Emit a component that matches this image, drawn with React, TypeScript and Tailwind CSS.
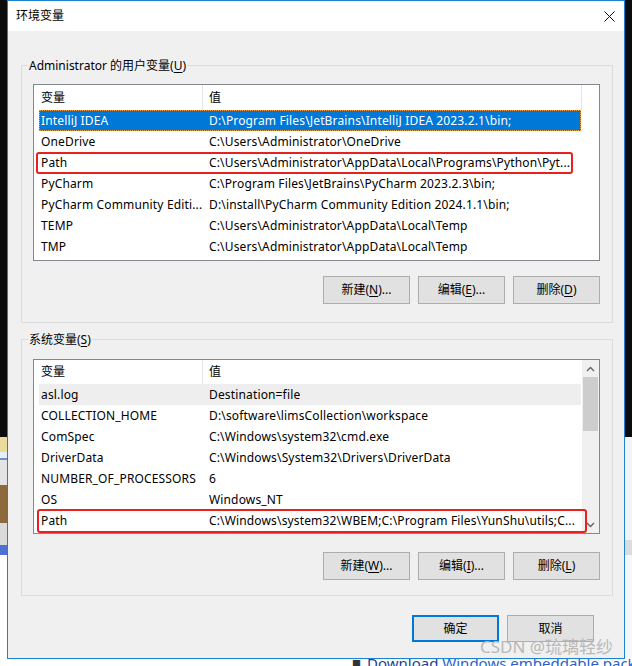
import React from "react";

const U = ({ c }: { c: string }) => (
  <span className="underline underline-offset-[2px] decoration-[1px]">{c}</span>
);

function Btn({
  children,
  primary,
  h = "h-[28px]",
}: {
  children: React.ReactNode;
  primary?: boolean;
  h?: string;
}) {
  return (
    <div
      className={
        "w-[87px] flex items-center justify-center bg-[#e1e1e1] text-[12px] text-black " +
        h +
        " " +
        (primary ? "border-2 border-[#0078d7]" : "border border-[#adadad]")
      }
    >
      {children}
    </div>
  );
}

function ListHeader() {
  return (
    <div className="flex h-[25px] w-[548px] border-r border-[#e5e5e5] shrink-0">
      <div className="w-[169px] h-full pl-[7px] flex items-center border-r border-[#e5e5e5]">
        变量
      </div>
      <div className="flex-1 h-full pl-[6px] flex items-center">值</div>
    </div>
  );
}

type Row = {
  k: string;
  v: string;
  selected?: boolean;
  inactive?: boolean;
  red?: "user" | "sys";
};

function ListRow({ r }: { r: Row }) {
  const bg = r.selected
    ? "bg-[#0078d7] text-white outline-1 outline-dotted outline-offset-[-1px] outline-[#f2a24a]"
    : r.inactive
    ? "bg-[#eeeeee] text-black"
    : "text-black";
  return (
    <div className={"relative ml-[5px] w-[542px] h-[21px] flex items-center shrink-0 tracking-[0.15px] " + bg}>
      <div className="w-[166px] pl-[2px] whitespace-nowrap overflow-hidden">{r.k}</div>
      <div className="flex-1 pl-[4px] whitespace-nowrap overflow-hidden">{r.v}</div>
      {r.red === "user" && (
        <div className="absolute left-[-3px] top-0 right-[8px] bottom-[-1px] border-2 border-[#e8201e] rounded-[3px]" />
      )}
      {r.red === "sys" && (
        <div className="absolute left-[-2px] top-[-1px] right-[-6px] bottom-[-2px] border-2 border-[#e8201e] rounded-[3px]" />
      )}
    </div>
  );
}

const userRows: Row[] = [
  { k: "IntelliJ IDEA", v: "D:\\Program Files\\JetBrains\\IntelliJ IDEA 2023.2.1\\bin;", selected: true },
  { k: "OneDrive", v: "C:\\Users\\Administrator\\OneDrive" },
  { k: "Path", v: "C:\\Users\\Administrator\\AppData\\Local\\Programs\\Python\\Pyt...", red: "user" },
  { k: "PyCharm", v: "C:\\Program Files\\JetBrains\\PyCharm 2023.2.3\\bin;" },
  { k: "PyCharm Community Editi...", v: "D:\\install\\PyCharm Community Edition 2024.1.1\\bin;" },
  { k: "TEMP", v: "C:\\Users\\Administrator\\AppData\\Local\\Temp" },
  { k: "TMP", v: "C:\\Users\\Administrator\\AppData\\Local\\Temp" },
];

const sysRows: Row[] = [
  { k: "asl.log", v: "Destination=file", inactive: true },
  { k: "COLLECTION_HOME", v: "D:\\software\\limsCollection\\workspace" },
  { k: "ComSpec", v: "C:\\Windows\\system32\\cmd.exe" },
  { k: "DriverData", v: "C:\\Windows\\System32\\Drivers\\DriverData" },
  { k: "NUMBER_OF_PROCESSORS", v: "6" },
  { k: "OS", v: "Windows_NT" },
  { k: "Path", v: "C:\\Windows\\system32\\WBEM;C:\\Program Files\\YunShu\\utils;C...", red: "sys" },
];

function Chevron({ up }: { up?: boolean }) {
  return (
    <svg width="9" height="6" viewBox="0 0 9 6">
      <path
        d={up ? "M1 5 L4.5 1.5 L8 5" : "M1 1 L4.5 4.5 L8 1"}
        fill="none"
        stroke="#606060"
        strokeWidth="1.3"
      />
    </svg>
  );
}

function Scrollbar() {
  return (
    <div className="w-[17px] h-full bg-[#f0f0f0] flex flex-col shrink-0">
      <div className="h-[17px] flex items-center justify-center">
        <Chevron up />
      </div>
      <div className="flex-1 px-[1px]">
        <div className="h-[54px] bg-[#cdcdcd]" />
      </div>
      <div className="h-[17px] flex items-center justify-center">
        <Chevron />
      </div>
    </div>
  );
}

function GroupLabel({ children }: { children: React.ReactNode }) {
  return (
    <div className="-mt-[8px] -ml-[5px] px-[1px] w-fit h-[16px] leading-[16px] bg-[#f0f0f0] text-black">
      {children}
    </div>
  );
}

export default function App() {
  return (
    <div className="relative w-[632px] h-[666px] overflow-hidden bg-white font-['Noto_Sans','Noto_Sans_CJK_SC',sans-serif] text-[12px]">
      <div className="flex h-[659px]">
        {/* left desktop strip */}
        <div className="w-[7px] h-full flex flex-col shrink-0">
          <div className="h-[437px] bg-[#0c0c0c]" />
          <div className="h-[15px] bg-[#eadb9c]" />
          <div className="h-[6px] bg-[#e8eef6]" />
          <div className="h-[2px] bg-[#6c8fcf]" />
          <div className="h-[25px] bg-[#e4e4e4]" />
          <div className="h-[38px] bg-[#8c6a3c]" />
          <div className="h-[22px] bg-[#dadada]" />
          <div className="h-[10px] bg-[#4d72d4]" />
          <div className="flex-1 bg-white" />
        </div>

        {/* window */}
        <div className="w-[618px] h-full border border-[#1883d7] flex flex-col bg-[#f0f0f0] shrink-0">
          <div className="h-[30px] bg-white flex items-center justify-between pl-[8px] pr-[9px] shrink-0">
            <span className="text-[12px] text-black">环境变量</span>
            <svg width="11" height="11" viewBox="0 0 11 11">
              <path d="M0.5 0.5 L10.5 10.5 M10.5 0.5 L0.5 10.5" stroke="#111" strokeWidth="1" />
            </svg>
          </div>

          <div className="flex-1 flex flex-col pl-[13px] pr-[11px]">
            {/* user group */}
            <div className="mt-[34px] h-[258px] border border-[#dcdcdc] pl-[11px] pr-[12px] flex flex-col">
              <GroupLabel>
                Administrator 的用户变量(<U c="U" />)
              </GroupLabel>
              <div className="mt-[10px] h-[177px] border border-[#828790] bg-white flex flex-col">
                <ListHeader />
                {userRows.map((r, i) => (
                  <ListRow key={i} r={r} />
                ))}
              </div>
              <div className="mt-[15px] flex justify-end gap-[8px]">
                <Btn>
                  新建(<U c="N" />)...
                </Btn>
                <Btn>
                  编辑(<U c="E" />)...
                </Btn>
                <Btn>
                  删除(<U c="D" />)
                </Btn>
              </div>
            </div>

            {/* system group */}
            <div className="mt-[16px] h-[257px] border border-[#dcdcdc] pl-[11px] pr-[12px] flex flex-col">
              <GroupLabel>
                系统变量(<U c="S" />)
              </GroupLabel>
              <div className="mt-[11px] h-[175px] border border-[#828790] bg-white flex">
                <div className="w-[548px] h-full flex flex-col shrink-0">
                  <div className="h-[24px] flex">
                    <div className="w-[169px] h-full pl-[7px] flex items-center border-r border-[#e5e5e5]">
                      变量
                    </div>
                    <div className="flex-1 h-full pl-[6px] flex items-center">值</div>
                  </div>
                  {sysRows.map((r, i) => (
                    <ListRow key={i} r={r} />
                  ))}
                </div>
                <Scrollbar />
              </div>
              <div className="mt-[18px] flex justify-end gap-[8px]">
                <Btn>
                  新建(<U c="W" />)...
                </Btn>
                <Btn>
                  编辑(<U c="I" />)...
                </Btn>
                <Btn>
                  删除(<U c="L" />)
                </Btn>
              </div>
            </div>

            {/* dialog buttons */}
            <div className="mt-[19px] flex justify-end gap-[8px] pr-[19px]">
              <Btn primary h="h-[27px]">确定</Btn>
              <Btn h="h-[27px]">取消</Btn>
            </div>
          </div>
        </div>

        {/* right desktop strip */}
        <div className="w-[7px] h-full flex flex-col shrink-0">
          <div className="h-[437px] bg-[#0c0c0c]" />
          <div className="h-[103px] bg-[#f4f4f4]" />
          <div className="h-[15px] bg-[#dcdcdc]" />
          <div className="flex-1 bg-[#f7f7f7]" />
        </div>
      </div>

      {/* below window */}
      <div className="h-[7px] overflow-hidden flex items-start pl-[352px]">
        <div className="-mt-[3px] flex items-center leading-[15px] text-[15px] whitespace-nowrap">
          <span className="text-[#333] text-[9px] mr-[6px]">■</span>
          <span className="text-[#1d3f8f]">Download </span>
          <span className="text-[#2a62c9]">&nbsp;Windows embeddable package</span>
        </div>
      </div>

      {/* watermark */}
      <div className="absolute left-[480px] top-[636px] text-[17px] leading-[22px] text-[#b8b8b8] whitespace-nowrap">
        CSDN @琉璃轻纱
      </div>
    </div>
  );
}
